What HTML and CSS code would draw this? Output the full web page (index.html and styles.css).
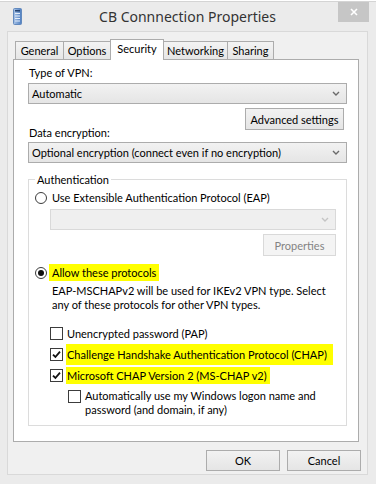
FILE: index.html
```
<!DOCTYPE html>
<html lang="en">
<head>
    <meta charset="UTF-8">
    <title>CB Connnection Properties</title>
    <link rel="stylesheet" href="styles.css">
</head>
<body>
    <div class="window">
        <!-- Title bar -->
        <div class="titlebar">
            <span class="app-icon">
                <svg width="9" height="17" viewBox="0 0 9 17">
                    <defs>
                        <linearGradient id="tower" x1="0" x2="1" y1="0" y2="0">
                            <stop offset="0" stop-color="#a9c4e8"/>
                            <stop offset="1" stop-color="#4d7dbf"/>
                        </linearGradient>
                    </defs>
                    <rect x="0.5" y="0.5" width="8" height="16" rx="1" fill="url(#tower)" stroke="#6289bd"/>
                    <rect x="2" y="2" width="5" height="1.5" fill="#24426f"/>
                    <rect x="2" y="5" width="5" height="1" fill="#e4edf9"/>
                    <rect x="2" y="7.5" width="5" height="1" fill="#e4edf9"/>
                    <rect x="2" y="10" width="5" height="1" fill="#e4edf9"/>
                    <rect x="2" y="12.5" width="5" height="1" fill="#e4edf9"/>
                </svg>
            </span>
            <span class="title">CB Connnection Properties</span>
            <span class="close">
                <svg width="8" height="8" viewBox="0 0 8 8">
                    <path d="M1 1l6 6M7 1l-6 6" stroke="#fff" stroke-width="1.6"/>
                </svg>
            </span>
        </div>

        <div class="client">
            <!-- Tabs -->
            <div class="tabs">
                <div class="tab tab-general">General</div>
                <div class="tab tab-options">Options</div>
                <div class="tab tab-security active">Security</div>
                <div class="tab tab-networking">Networking</div>
                <div class="tab tab-sharing">Sharing</div>
            </div>

            <div class="panel">
                <div class="label">Type of VPN:</div>
                <div class="combo">
                    <span>Automatic</span>
                    <svg class="chev" width="8" height="5" viewBox="0 0 8 5"><path d="M1 1l3 3 3-3" fill="none" stroke="#6a6a6a" stroke-width="1.4"/></svg>
                </div>
                <div class="btn-row inset">
                    <button class="btn btn-wide">Advanced settings</button>
                </div>

                <div class="label label-tight">Data encryption:</div>
                <div class="combo combo-2">
                    <span>Optional encryption (connect even if no encryption)</span>
                    <svg class="chev" width="8" height="5" viewBox="0 0 8 5"><path d="M1 1l3 3 3-3" fill="none" stroke="#6a6a6a" stroke-width="1.4"/></svg>
                </div>

                <!-- Authentication group -->
                <fieldset class="group">
                    <legend>Authentication</legend>

                    <div class="opt">
                        <span class="radio"></span>
                        <span>Use Extensible Authentication Protocol (EAP)</span>
                    </div>
                    <div class="combo disabled">
                        <span></span>
                        <svg class="chev" width="8" height="5" viewBox="0 0 8 5"><path d="M1 1l3 3 3-3" fill="none" stroke="#c4c4c4" stroke-width="1.4"/></svg>
                    </div>
                    <div class="btn-row">
                        <button class="btn" disabled>Properties</button>
                    </div>

                    <div class="opt opt-allow">
                        <span class="radio checked"></span>
                        <span class="hl hl-allow">Allow these protocols</span>
                    </div>
                    <p class="note">EAP-MSCHAPv2 will be used for IKEv2 VPN type. Select<br>any of these protocols for other VPN types.</p>

                    <ul class="checks">
                        <li class="check">
                            <span class="box"></span>
                            <span>Unencrypted password (PAP)</span>
                        </li>
                        <li class="check">
                            <span class="box"><svg width="9" height="9" viewBox="0 0 9 9"><path d="M1 4.6l2.4 2.4L8 1.6" fill="none" stroke="#111" stroke-width="1.8"/></svg></span>
                            <span class="hl hl-chap">Challenge Handshake Authentication Protocol (CHAP)</span>
                        </li>
                        <li class="check">
                            <span class="box"><svg width="9" height="9" viewBox="0 0 9 9"><path d="M1 4.6l2.4 2.4L8 1.6" fill="none" stroke="#111" stroke-width="1.8"/></svg></span>
                            <span class="hl hl-ms">Microsoft CHAP Version 2 (MS-CHAP v2)</span>
                        </li>
                        <li class="check sub">
                            <span class="box"></span>
                            <span>Automatically use my Windows logon name and<br>password (and domain, if any)</span>
                        </li>
                    </ul>
                </fieldset>
            </div>

            <!-- Dialog buttons -->
            <div class="actions">
                <button class="btn btn-dlg">OK</button>
                <button class="btn btn-dlg">Cancel</button>
            </div>
        </div>
    </div>
</body>
</html>
```

FILE: styles.css
```
/* Basis */
* {
    box-sizing: border-box;
}

body {
    margin: 0;
    background: #fff;
    font-family: Lato, "Liberation Sans", sans-serif;
    font-size: 11px;
    color: #000;
}

/* Fensterrahmen */
.window {
    width: 376px;
    height: 483px;
    margin-top: 1px;
    padding: 0 8px 9px 7px;
    background: #ebebeb;
    border-top: 1px solid #d4d4d4;
    display: flex;
    flex-direction: column;
}

.titlebar {
    height: 29px;
    flex: none;
    display: grid;
    grid-template-columns: 1fr auto 1fr;
    align-items: center;
}

.app-icon {
    padding-left: 6px;
    display: flex;
    margin-top: -1px;
}

.title {
    font-family: "Noto Sans", sans-serif;
    font-size: 14px;
    color: #333;
}

.close {
    justify-self: end;
    align-self: start;
    width: 31px;
    height: 20px;
    margin-right: -1px;
    background: #c6c6c6;
    display: flex;
    align-items: center;
    justify-content: center;
}

.client {
    flex: 1;
    background: #f0f0f0;
    border: 1px solid #d9d9d9;
    padding: 7px 6px 0 5px;
    display: flex;
    flex-direction: column;
}

/* Reiter */
.tabs {
    display: flex;
    align-items: flex-end;
    padding-left: 2px;
    margin-bottom: -1px;
    position: relative;
    z-index: 1;
}

.tab {
    height: 18px;
    margin-bottom: 1px;
    margin-right: -1px;
    line-height: 17px;
    text-align: center;
    border: 1px solid #acacac;
    border-bottom: none;
    background: linear-gradient(#f3f3f3, #e6e6e6);
}

.tab-general { width: 49px; }
.tab-options { width: 48px; }
.tab-security { width: 54px; }
.tab-networking { width: 65px; }
.tab-sharing { width: 47px; }

.tab.active {
    height: 21px;
    margin-bottom: 0;
    padding-bottom: 2px;
    line-height: 18px;
    background: #fff;
    position: relative;
}

.panel {
    background: #fff;
    border: 1px solid #acacac;
    margin-right: 2px;
    padding: 6px 11px 15px 14px;
}

/* Beschriftungen und Listen */
.label {
    line-height: 13px;
    padding-left: 1px;
}

.label-tight {
    margin-top: -4px;
}

.combo {
    height: 21px;
    margin-top: 4px;
    padding: 0 6px 0 3px;
    border: 1px solid #acacac;
    background: linear-gradient(#f2f2f2, #e5e5e5);
    display: flex;
    align-items: center;
}

.combo-2 {
    margin-top: 3px;
}

.combo .chev {
    margin-left: auto;
}

.combo.disabled {
    margin: 5px 0 0 15px;
    background: #efefef;
    border-color: #d9d9d9;
}

.btn-row {
    display: flex;
    justify-content: flex-end;
    margin-top: 4px;
}

.btn-row.inset {
    padding-right: 3px;
}

.btn {
    height: 22px;
    padding: 0;
    width: 73px;
    font: inherit;
    color: #000;
    border: 1px solid #acacac;
    background: linear-gradient(#f2f2f2, #e5e5e5);
}

.btn-wide {
    width: 99px;
}

.btn:disabled {
    color: #838383;
    background: #f4f4f4;
    border-color: #d9d9d9;
}

.group {
    margin: 10px 0 0;
    padding: 5px 10px 8px 6px;
    border: 1px solid #dcdcdc;
    min-width: 0;
}

.group legend {
    padding: 0 2px;
    line-height: 13px;
}

.opt {
    display: flex;
    align-items: center;
    gap: 5px;
    line-height: 13px;
}

.opt-allow {
    margin-top: 8px;
}

.radio {
    width: 12px;
    height: 12px;
    border: 1px solid #3c3c3c;
    border-radius: 50%;
    background: #fff;
    display: flex;
    align-items: center;
    justify-content: center;
    flex: none;
}

.radio.checked::after {
    content: "";
    width: 6px;
    height: 6px;
    border-radius: 50%;
    background: #111;
}

.hl {
    background: #ffff00;
    padding: 2px 3px 2px 1px;
    margin-left: -1px;
}

.hl-allow {
    padding-left: 3px;
    margin-left: -3px;
}

.hl-chap {
    padding: 4px 6px 4px 1px;
}

.note {
    margin: 3px 0 0 17px;
    line-height: 14px;
}

.checks {
    list-style: none;
    margin: 11px 0 0;
    padding: 0;
}

.check {
    height: 21px;
    display: flex;
    align-items: center;
    gap: 4px;
    padding-left: 15px;
}

.check.sub {
    height: auto;
    margin-top: 3px;
    align-items: flex-start;
    padding-left: 33px;
    line-height: 14px;
}

.check.sub .box {
    margin-top: 1px;
}

.box {
    width: 13px;
    height: 13px;
    flex: none;
    border: 1px solid #3c3c3c;
    background: #fff;
    display: flex;
    align-items: center;
    justify-content: center;
}

/* Dialogknöpfe */
.actions {
    display: flex;
    justify-content: flex-end;
    gap: 7px;
    margin-top: 8px;
}

.btn-dlg {
    width: 74px;
    height: 21px;
}
```
